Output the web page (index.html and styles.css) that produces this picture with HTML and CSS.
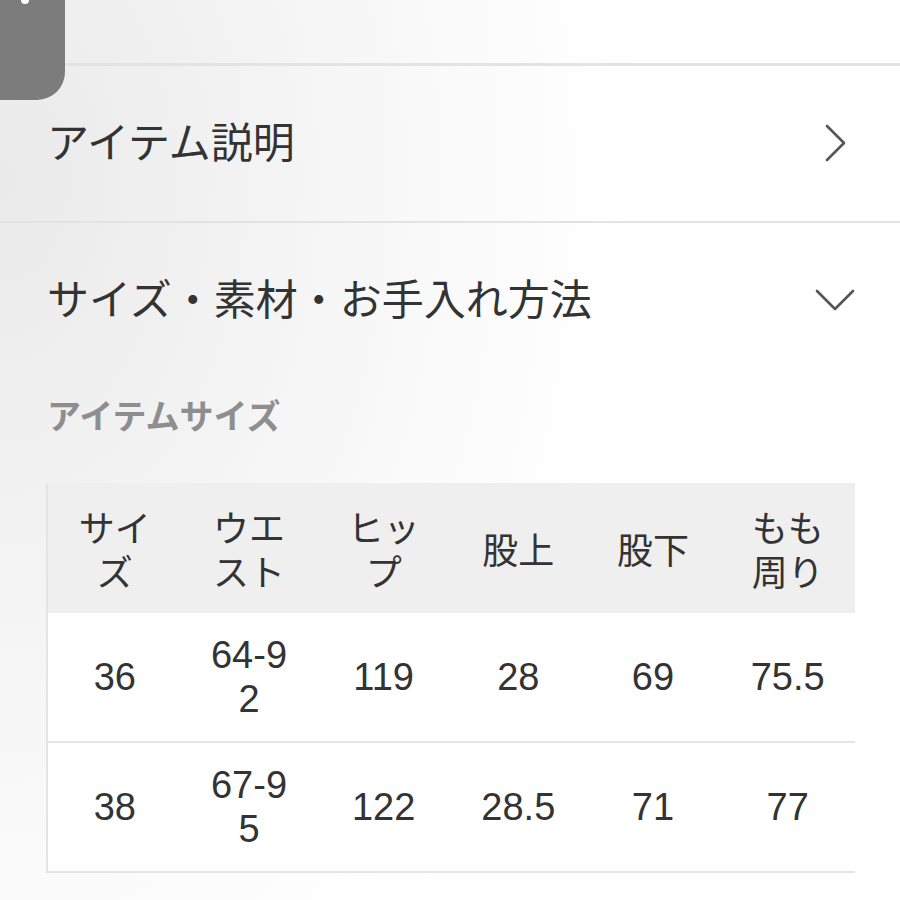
FILE: index.html
```html
<!DOCTYPE html>
<html lang="ja">
<head>
<meta charset="utf-8">
<title>アイテム詳細</title>
<link rel="stylesheet" href="styles.css">
</head>
<body>
<div class="page">
  <div class="topbar">
    <div class="thumb"><span class="thumb-dot"></span></div>
  </div>
  <div class="acc-row">
    <span class="acc-title">アイテム説明</span>
    <svg class="chev-right" width="24" height="40" viewBox="0 0 24 40"><path d="M3 3 L20 20 L3 37" fill="none" stroke="#555" stroke-width="2.6" stroke-linecap="round" stroke-linejoin="round"/></svg>
  </div>
  <div class="acc-row acc-open">
    <span class="acc-title">サイズ・素材・お手入れ方法</span>
    <svg class="chev-down" width="42" height="24" viewBox="0 0 42 24"><path d="M3 3 L21 21 L39 3" fill="none" stroke="#555" stroke-width="2.6" stroke-linecap="round" stroke-linejoin="round"/></svg>
  </div>
  <div class="section-label">アイテムサイズ</div>
  <table class="size-table">
    <thead>
      <tr><th>サイズ</th><th>ウエスト</th><th>ヒップ</th><th>股上</th><th>股下</th><th>もも周り</th></tr>
    </thead>
    <tbody>
      <tr><td>36</td><td>64-92</td><td>119</td><td>28</td><td>69</td><td>75.5</td></tr>
      <tr><td>38</td><td>67-95</td><td>122</td><td>28.5</td><td>71</td><td>77</td></tr>
    </tbody>
  </table>
</div>
</body>
</html>
```
FILE: styles.css
```css
html, body {
  margin: 0;
  padding: 0;
}
body {
  width: 900px;
  height: 900px;
  overflow: hidden;
  font-family: "Liberation Sans", "Noto Sans CJK JP", sans-serif;
  color: #333;
  background: radial-gradient(ellipse 640px 950px at 0px 180px, #eaeaea 0%, #f3f3f3 40%, #fbfbfb 75%, #ffffff 100%);
}
.page {
  position: relative;
  width: 900px;
}
.topbar {
  height: 63px;
  border-bottom: 3px solid #e3e3e3;
}
.thumb {
  position: absolute;
  left: 0;
  top: 0;
  width: 65px;
  height: 100px;
  background: #7c7c7c;
  border-bottom-right-radius: 28px;
  z-index: 2;
}
.thumb-dot {
  position: absolute;
  left: 21px;
  top: -4px;
  width: 8px;
  height: 8px;
  border-radius: 50%;
  background: #fff;
}
.acc-row {
  height: 155px;
  display: flex;
  align-items: center;
  justify-content: space-between;
  padding: 0 50px 0 47px;
  border-bottom: 2px solid #e3e3e3;
}
.acc-open {
  border-bottom: none;
  height: 156px;
  padding-right: 44px;
}
.acc-title {
  font-family: "Noto Sans CJK JP", sans-serif;
  font-size: 42px;
  line-height: 1;
  color: #333;
  margin-bottom: 8px;
}
.chev-right {
  display: block;
  margin-right: 2px;
  margin-bottom: 2px;
}
.chev-down {
  display: block;
  margin-bottom: 2px;
}
.section-label {
  font-family: "Noto Sans CJK JP", sans-serif;
  font-weight: 700;
  font-size: 34px;
  line-height: 34px;
  height: 34px;
  color: #8e8e8e;
  padding-left: 47px;
  margin-top: 19px;
}
.size-table {
  margin: 51px 0 0 46px;
  width: 809px;
  table-layout: fixed;
  border-collapse: collapse;
  border-left: 2px solid #e4e4e4;
  font-size: 36px;
  line-height: 44px;
  color: #333;
}
.size-table th,
.size-table td {
  text-align: center;
  vertical-align: middle;
  padding: 0 27px;
  word-break: break-all;
  font-weight: 400;
}
.size-table th {
  font-family: "Noto Sans CJK JP", sans-serif;
  background: #efefef;
  height: 130px;
}
.size-table td {
  background: #fff;
  height: 128px;
  font-size: 38px;
  border-bottom: 2px solid #e4e4e4;
}
```
